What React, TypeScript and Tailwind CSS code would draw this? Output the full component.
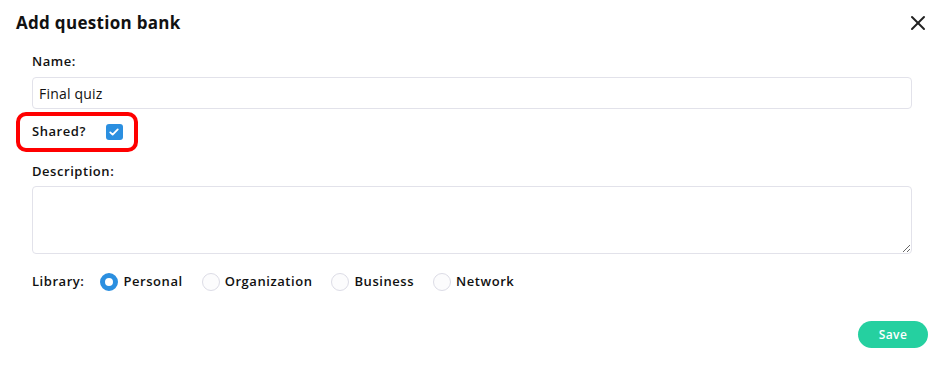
import { X } from 'lucide-react'

const libraries = ['Personal', 'Organization', 'Business', 'Network']

export default function App() {
  return (
    <div className="w-[937px] h-[365px] bg-white text-[#111] font-['Open_Sans',sans-serif] relative">
      <div className="flex items-center justify-between pl-4 pr-[7px] pt-[11px]">
        <h2 className="text-[17px] font-bold leading-6 tracking-[0.3px]">Add question bank</h2>
        <X className="w-[24px] h-[24px] text-[#222]" strokeWidth={2} />
      </div>

      <div className="pl-8 pr-[25px] pt-[18px] tracking-[0.55px]">
        <label className="block text-[13px] font-semibold leading-4">Name:</label>
        <input
          type="text"
          defaultValue="Final quiz"
          className="mt-[8px] w-full h-[32px] rounded border border-[#e2e2ea] px-[6px] text-[14px] text-[#111] tracking-[0.2px] outline-none"
        />

        <div className="-ml-4 mt-[3px] w-[122px] h-[40px] rounded-[10px] border-[4px] border-[#f00] flex items-center pl-3">
          <span className="text-[13px] font-semibold">Shared?</span>
          <span className="ml-[20px] w-[17px] h-[16px] rounded-[3px] bg-[#2b8fe0] flex items-center justify-center">
            <svg viewBox="0 0 16 16" className="w-[12px] h-[12px]" fill="none" stroke="white" strokeWidth={2.4} strokeLinecap="round" strokeLinejoin="round">
              <path d="M3 8.5l3.2 3L13 4.5" />
            </svg>
          </span>
        </div>

        <label className="block mt-[11px] text-[13px] font-semibold leading-4">Description:</label>
        <textarea className="mt-[7px] block w-full h-[68px] rounded border border-[#e2e2ea] outline-none resize-y" />

        <div className="mt-[18px] flex items-center h-[20px] text-[13px] font-semibold">
          <span className="mr-[16px]">Library:</span>
          {libraries.map((lib, i) => (
            <label key={lib} className="flex items-center mr-[19px]">
              {i === 0 ? (
                <span className="w-[18px] h-[18px] rounded-full border-[5px] border-[#2b8fe0] bg-white" />
              ) : (
                <span className="w-[18px] h-[18px] rounded-full border border-[#dcdce6] bg-[#fcfcfd]" />
              )}
              <span className="ml-[5px]">{lib}</span>
            </label>
          ))}
        </div>
      </div>

      <div className="flex justify-end pr-[9px] mt-[29px]">
        <button className="w-[70px] h-[27px] rounded-full bg-[#25d0a0] text-white text-[12px] font-semibold tracking-[0.4px]">Save</button>
      </div>
    </div>
  )
}
